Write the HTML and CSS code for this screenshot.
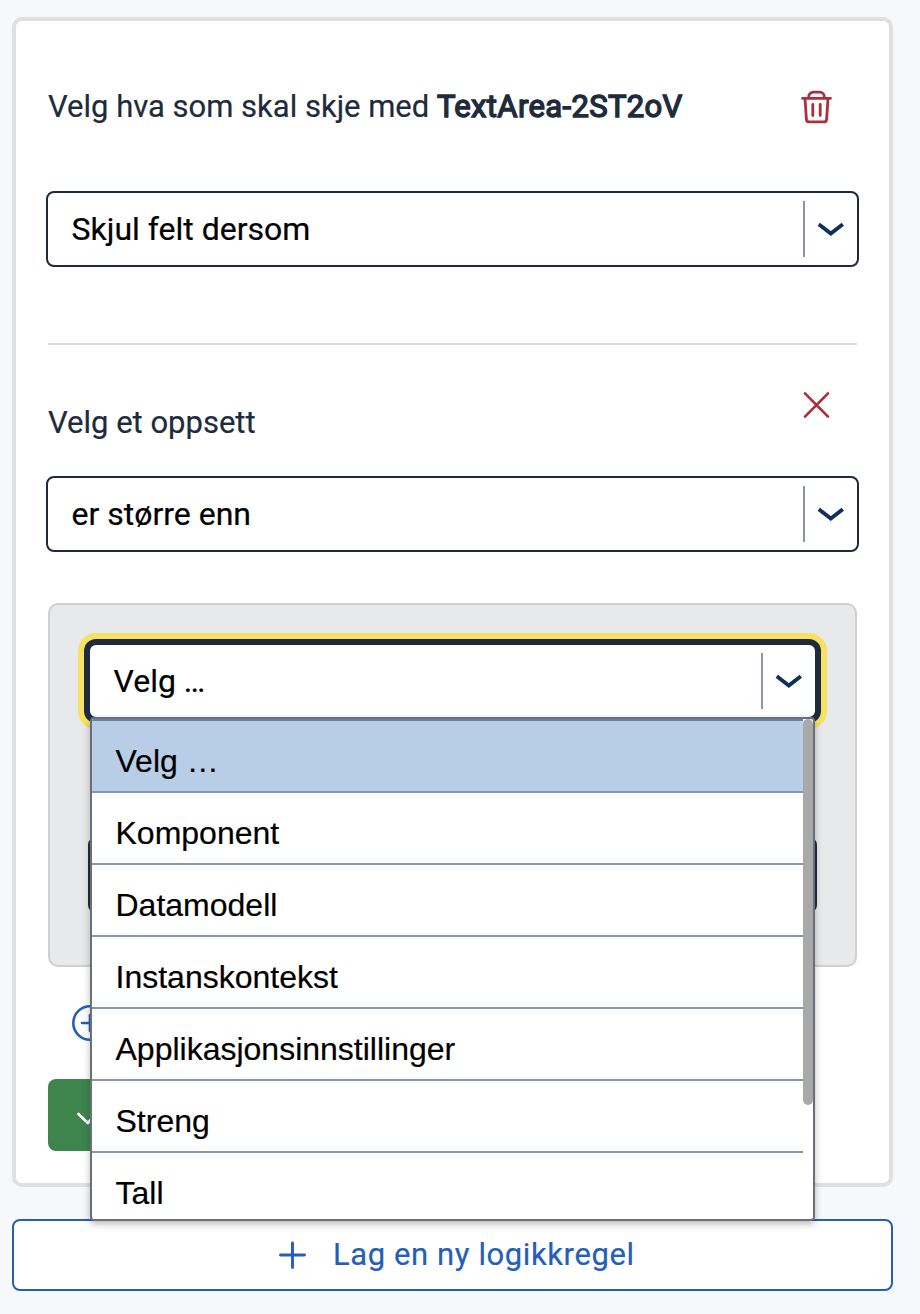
FILE: index.html
```html
<!DOCTYPE html>
<html lang="nb">
<head>
<meta charset="utf-8">
<title>Logikkregel</title>
<link rel="stylesheet" href="styles.css">
</head>
<body>
<main class="page">
  <section class="card">
    <header class="card-header">
      <p class="label"><span class="lead">Velg hva som skal skje med</span> <span class="component-id">TextArea-2ST2oV</span></p>
      <svg class="icon-trash" viewBox="0 0 32 36" fill="none" stroke="#a9303c" stroke-width="2.8" stroke-linecap="round" stroke-linejoin="round">
        <path d="M1.5 9.3h28M7.7 9v-1.2a4.7 4.7 0 0 1 4.7-4.7h6.2a4.7 4.7 0 0 1 4.7 4.7V9M4 9.5l1.4 20.8a2.8 2.8 0 0 0 2.8 2.6h14.6a2.8 2.8 0 0 0 2.8-2.6l1.4-20.8"/>
        <path d="M11.8 15.5v11M19.2 15.5v11"/>
      </svg>
    </header>
    <div class="select">
      <span class="value value-action">Skjul felt dersom</span>
      <span class="arrow"><svg viewBox="0 0 28 16"><path d="M1.8 3.2 13.8 12.6 25.8 3.2"/></svg></span>
    </div>
    <hr class="divider">
    <div class="condition-header">
      <p class="label label-setup">Velg et oppsett</p>
      <svg class="icon-close" viewBox="0 0 28 28" fill="none" stroke="#a9303c" stroke-width="2.7" stroke-linecap="round"><path d="M2 2.4 25 25.6M25 2.4 2 25.6"/></svg>
    </div>
    <div class="select">
      <span class="value value-operator">er større enn</span>
      <span class="arrow"><svg viewBox="0 0 28 16"><path d="M1.8 3.2 13.8 12.6 25.8 3.2"/></svg></span>
    </div>
    <div class="expression">
      <div class="select focused">
        <span class="value value-type">Velg …</span>
        <span class="arrow"><svg viewBox="0 0 28 16"><path d="M1.8 3.2 13.8 12.6 25.8 3.2"/></svg></span>
        <div class="menu">
          <ul class="options">
            <li class="option selected">Velg …</li>
            <li class="option">Komponent</li>
            <li class="option">Datamodell</li>
            <li class="option">Instanskontekst</li>
            <li class="option">Applikasjonsinnstillinger</li>
            <li class="option">Streng</li>
            <li class="option">Tall</li>
          </ul>
          <div class="scrollbar"><div class="thumb"></div></div>
        </div>
      </div>
      <div class="select second"></div>
    </div>
    <div class="add-row">
      <svg class="icon-add" viewBox="0 0 36 36" fill="none" stroke="#245fb5" stroke-width="2.6"><circle cx="18" cy="18" r="16.7"/><path d="M10 18h16M18 10v16" stroke-linecap="round"/></svg>
    </div>
    <div class="save">
      <svg class="icon-check" viewBox="0 0 32 24" fill="none" stroke="#fff" stroke-width="2.8" stroke-linecap="round" stroke-linejoin="round"><path d="M3.5 11 12.8 20 28 4"/></svg>
    </div>
  </section>
  <button class="new-rule" type="button">
    <svg class="icon-plus" viewBox="0 0 28 28" fill="none" stroke="#245fb5" stroke-width="2.9" stroke-linecap="round"><path d="M2.5 14h24M14.5 2v24.5"/></svg>
    <span class="new-rule-text">Lag en ny logikkregel</span>
  </button>
</main>
</body>
</html>
```
FILE: styles.css
```css
* { box-sizing: border-box; }

body {
  margin: 0;
  background: #f7f8fa;
  color: #1e2b3c;
  font-family: Roboto, "Liberation Sans", sans-serif;
  font-size: 32px;
}

p, ul { margin: 0; padding: 0; }
svg { display: block; }

.page {
  width: 881px;
  height: 1314px;
  margin-left: 12px;
  padding-top: 17px;
}

.card {
  height: 1170px;
  padding: 0 32px;
  background: #fff;
  border: 4px solid #e0e0e0;
  border-radius: 10px;
}

.card-header {
  display: flex;
  justify-content: space-between;
  align-items: flex-start;
  height: 170px;
  padding: 62px 24px 0 0;
}

.label {
  font-size: 31px;
  line-height: 48px;
  white-space: nowrap;
  -webkit-text-stroke: 0.2px #1e2b3c;
}

.component-id {
  letter-spacing: 0.35px;
  -webkit-text-stroke: 1.4px #1e2b3c;
}

.icon-trash { width: 32px; height: 36px; margin-top: 6px; }

.select {
  display: flex;
  align-items: center;
  justify-content: space-between;
  height: 76px;
  margin: 0 -2px;
  padding-left: 23.5px;
  background: #fff;
  border: 2px solid #1e2b3c;
  border-radius: 8px;
  color: #000;
}

.value {
  line-height: 48px;
  white-space: nowrap;
  -webkit-text-stroke: 0.2px #000;
}

.arrow {
  display: flex;
  align-items: center;
  width: 54px;
  height: 56px;
  padding-left: 12px;
  border-left: 2px solid #8896aa;
}

.arrow svg {
  width: 28px;
  height: 16px;
  fill: none;
  stroke: #0f2f5f;
  stroke-width: 3.8;
}

.divider {
  height: 2px;
  margin: 76px 0 0;
  border: 0;
  background: #dedede;
}

.condition-header {
  display: flex;
  justify-content: space-between;
  align-items: flex-start;
  height: 131px;
  padding: 46px 26px 0 0;
}

.label-setup { padding-top: 8px; }

.icon-close { width: 28px; height: 28px; }

.expression {
  height: 364px;
  margin-top: 51px;
  padding: 38px 40px 0;
  background: #e8e9eb;
  border: 2px solid #d0d0d0;
  border-radius: 10px;
}

.focused {
  position: relative;
  box-shadow: 0 0 0 4px #1e2b3c, 0 0 0 10px #f6e163;
}

.second {
  height: 76px;
  margin-top: 118px;
}

.menu {
  position: absolute;
  z-index: 2;
  top: 72px;
  left: 0;
  display: flex;
  width: 725px;
  height: 504px;
  background: #fff;
  border: 2px solid #6a6f7e;
  border-radius: 4px;
  box-shadow: 0 3px 7px rgba(40, 20, 30, 0.3);
  overflow: hidden;
}

.options {
  flex: 1;
  list-style: none;
  font-family: "Liberation Sans", Arial, sans-serif;
  border-top: 2px solid #6581a0;
}

.option {
  height: 72px;
  padding: 4px 0 0 23.5px;
  line-height: 72px;
  border-bottom: 2px solid #8896aa;
  -webkit-text-stroke: 0.2px #000;
}

.selected { background: #b8cee7; }

.scrollbar { width: 10px; }

.thumb {
  height: 386px;
  border-radius: 5px;
  background: #a9a9a9;
}

.add-row { padding: 38px 0 0 24px; }

.icon-add { width: 36px; height: 36px; }

.save {
  display: flex;
  align-items: center;
  width: 160px;
  height: 72px;
  margin-top: 38px;
  padding-left: 27px;
  background: #3d854d;
  border-radius: 8px;
}

.icon-check { width: 32px; height: 24px; }

.new-rule {
  display: flex;
  align-items: center;
  justify-content: flex-start;
  width: 881px;
  height: 72px;
  margin-top: 32px;
  padding: 0 0 0 264px;
  gap: 27px;
  background: #fff;
  border: 2px solid #245fb5;
  border-radius: 8px;
  color: #245fb5;
  font: 31px/48px Roboto, "Liberation Sans", sans-serif;
}

.icon-plus { width: 28px; height: 28px; }

.new-rule-text {
  padding-bottom: 1px;
  white-space: nowrap;
  letter-spacing: 0.6px;
  -webkit-text-stroke: 0.2px #245fb5;
}
```
